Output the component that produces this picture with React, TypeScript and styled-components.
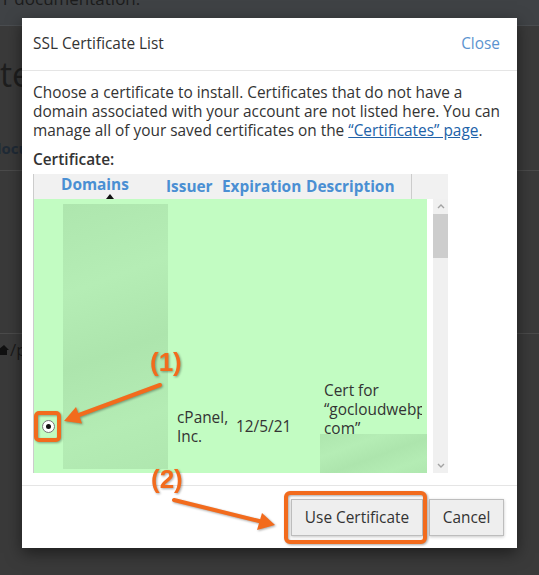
import React from "react";
import styled, { createGlobalStyle } from "styled-components";

const GlobalStyle = createGlobalStyle`
  html, body {
    margin: 0;
    padding: 0;
    background: #3a3a3a;
    overflow: hidden;
  }
  * {
    box-sizing: border-box;
  }
`;

const Palette = {
  text: "#333333",
  link: "#2162a8",
  close: "#5b93cf",
  heading: "#4a8fd3",
  green: "#c2fcc2",
  blur: "#b0e8b0",
  border: "#e5e5e5",
  orange: "#f26b1d",
};

const FONT = "15.4px";

const Page = styled.div`
  position: relative;
  width: 539px;
  height: 575px;
  overflow: hidden;
  font-family: "Open Sans", "Liberation Sans", sans-serif;
  background: #3a3a3a;
`;

const TopBar = styled.div`
  height: 26px;
  background: #3f4245;
  border-bottom: 1px solid #4a4d50;
  color: #1c1c1c;
  font-size: 17px;
  line-height: 16px;
  padding-left: 3px;
  overflow: hidden;

  span {
    display: block;
    margin-top: -9px;
  }
`;

const BgTitle = styled.div`
  color: #1e1e1e;
  font-size: 34px;
  line-height: 40px;
  padding: 28px 0 0 0;
  white-space: nowrap;
`;

const BgTab = styled.div`
  color: #1f2a36;
  font-weight: 700;
  font-size: 15px;
  line-height: 20px;
  margin: 44px 0 0 -8px;
  padding-bottom: 12px;
  border-bottom: 1px solid #4b4b4b;
  white-space: nowrap;
`;

const BgPath = styled.div`
  display: flex;
  align-items: center;
  gap: 1px;
  margin-top: 162px;
  padding-top: 6px;
  border-top: 1px solid #4b4b4b;
  color: #1a1a1a;
  font-size: 17px;
  line-height: 20px;
`;

const Modal = styled.div`
  position: absolute;
  top: 18px;
  left: 22px;
  width: 495px;
  background: #ffffff;
  box-shadow: 0 5px 15px rgba(0, 0, 0, 0.5);
  color: ${Palette.text};
`;

const ModalHeader = styled.div`
  height: 53px;
  display: flex;
  align-items: center;
  justify-content: space-between;
  padding: 0 17px 1px 11px;
  border-bottom: 1px solid ${Palette.border};
  font-size: ${FONT};
`;

const Title = styled.span`
  color: ${Palette.text};
`;

const CloseLink = styled.span`
  color: ${Palette.close};
`;

const ModalBody = styled.div`
  padding: 12px 11px 12px 11px;
  font-size: ${FONT};
  line-height: 19px;
`;

const Intro = styled.p`
  margin: 0;
`;

const Link = styled.span`
  color: ${Palette.link};
  text-decoration: underline;
`;

const FieldLabel = styled.div`
  margin-top: 10px;
  font-weight: 600;
`;

const Table = styled.div`
  margin-top: 5px;
  width: 415px;
  border-left: 1px solid #cccccc;
`;

const TableHead = styled.div`
  height: 25px;
  background: #f1f1f1;
  display: grid;
  grid-template-columns: 27px 105px 56px 84px 106px 1fr;
  align-items: end;
`;

const HeadCell = styled.div<{ $divider?: boolean; $raised?: boolean }>`
  height: 100%;
  display: flex;
  flex-direction: column;
  justify-content: ${(p) => (p.$raised ? "flex-start" : "flex-end")};
  padding-bottom: ${(p) => (p.$raised ? "0" : "3px")};
  color: ${Palette.heading};
  font-weight: 700;
  font-size: ${FONT};
  line-height: 19px;
  white-space: nowrap;
  border-right: ${(p) => (p.$divider ? "1px solid #cccccc" : "none")};
`;

const SortArrow = styled.div`
  width: 0;
  height: 0;
  margin: 0 0 0 45px;
  border-left: 4px solid transparent;
  border-right: 4px solid transparent;
  border-bottom: 5px solid #111111;
`;

const TableBody = styled.div`
  display: flex;
  height: 274px;
  background: #ffffff;
`;

const Row = styled.div`
  width: 393px;
  height: 100%;
  background: ${Palette.green};
  display: grid;
  grid-template-columns: 29px 109px 60px 87px 108px;
  grid-template-rows: 1fr 93px;
  overflow: hidden;
`;

const Cell = styled.div<{ $pad?: number }>`
  grid-row: 2;
  align-self: center;
  padding-left: ${(p) => p.$pad ?? 0}px;
  font-size: ${FONT};
  line-height: 19px;
  color: ${Palette.text};
`;

const RadioCell = styled.div`
  grid-row: 2;
  grid-column: 1;
  display: flex;
  justify-content: center;
  align-items: center;
`;

const Radio = styled.div`
  width: 13px;
  height: 13px;
  border-radius: 50%;
  border: 1px solid #767676;
  background: #ffffff;
  display: flex;
  align-items: center;
  justify-content: center;

  &::after {
    content: "";
    width: 5px;
    height: 5px;
    border-radius: 50%;
    background: #111111;
  }
`;

const DomainCell = styled.div`
  grid-row: 1 / 3;
  grid-column: 2;
  padding: 5px 4px 4px 0;
  display: flex;
`;

const Blurred = styled.div<{ $h?: number; $w?: number }>`
  flex: 1;
  width: ${(p) => (p.$w ? `${p.$w}px` : "auto")};
  height: ${(p) => (p.$h ? `${p.$h}px` : "auto")};
  background: linear-gradient(
    160deg,
    #aee6ae 0%,
    #b5edb5 30%,
    #ade5ad 55%,
    #b4ecb4 80%,
    #afe7af 100%
  );
`;

const DescCell = styled.div`
  grid-row: 2;
  grid-column: 5;
  align-self: center;
  font-size: ${FONT};
  line-height: 19px;
`;

const DescText = styled.div`
  width: 103px;
  padding-left: 5px;
  overflow: hidden;
  white-space: nowrap;
`;

const DescBlur = styled.div`
  margin: -4px 0 0 1px;
  display: flex;
`;

const Scrollbar = styled.div`
  margin-left: 6px;
  width: 15px;
  background: #f0f0f0;
  display: flex;
  flex-direction: column;
`;

const ScrollArrow = styled.div`
  height: 15px;
  display: flex;
  align-items: center;
  justify-content: center;
`;

const Thumb = styled.div`
  height: 44px;
  background: #cdcdcd;
`;

const Track = styled.div`
  flex: 1;
`;

const ModalFooter = styled.div`
  border-top: 1px solid ${Palette.border};
  padding: 13px 13px 12px;
  display: flex;
  justify-content: flex-end;
  gap: 6px;
`;

const Button = styled.button<{ $w: number }>`
  width: ${(p) => p.$w}px;
  height: 37px;
  padding: 0;
  background: #eeeeee;
  border: 1px solid #bdbdbd;
  box-shadow: 0 1px 3px rgba(0, 0, 0, 0.22);
  font-family: "Open Sans", "Liberation Sans", sans-serif;
  font-size: ${FONT};
  color: ${Palette.text};
`;

const Annotations = styled.svg`
  position: absolute;
  top: 0;
  left: 0;
  pointer-events: none;
  filter: drop-shadow(1px 1px 1px rgba(0, 0, 0, 0.35));
`;

const Chevron = ({ up }: { up?: boolean }) => (
  <svg width="8" height="5" viewBox="0 0 8 5">
    <polyline
      points={up ? "1,4 4,1 7,4" : "1,1 4,4 7,1"}
      fill="none"
      stroke="#a3a3a3"
      strokeWidth="1.4"
    />
  </svg>
);

const HomeIcon = () => (
  <svg width="9" height="12" viewBox="0 0 9 12">
    <path d="M-2 6 L4 1 L9 6 L7 6 L7 11 L-1 11 L-1 6 Z" fill="#111111" />
  </svg>
);

export default function App() {
  return (
    <Page>
      <GlobalStyle />
      <TopBar>
        <span>r documentation.</span>
      </TopBar>
      <BgTitle>tes</BgTitle>
      <BgTab>documentation</BgTab>
      <BgPath>
        <HomeIcon />
        <span>/public_html</span>
      </BgPath>

      <Modal>
        <ModalHeader>
          <Title>SSL Certificate List</Title>
          <CloseLink>Close</CloseLink>
        </ModalHeader>
        <ModalBody>
          <Intro>
            Choose a certificate to install. Certificates that do not have a
            domain associated with your account are not listed here. You can
            manage all of your saved certificates on the{" "}
            <Link>“Certificates” page</Link>.
          </Intro>
          <FieldLabel>Certificate:</FieldLabel>
          <Table>
            <TableHead>
              <div />
              <HeadCell $raised>
                <span style={{ marginTop: 1 }}>Domains</span>
                <div style={{ flex: 1 }} />
                <SortArrow />
              </HeadCell>
              <HeadCell>Issuer</HeadCell>
              <HeadCell>Expiration</HeadCell>
              <HeadCell $divider>Description</HeadCell>
              <div />
            </TableHead>
            <TableBody>
              <Row>
                <RadioCell>
                  <Radio />
                </RadioCell>
                <DomainCell>
                  <Blurred />
                </DomainCell>
                <Cell $pad={5} style={{ gridColumn: 3 }}>
                  cPanel, Inc.
                </Cell>
                <Cell $pad={4} style={{ gridColumn: 4 }}>
                  12/5/21
                </Cell>
                <DescCell>
                  <DescText>
                    <div>Cert for</div>
                    <div>“gocloudwebpanel.</div>
                    <div>com”</div>
                  </DescText>
                  <DescBlur>
                    <Blurred $w={104} $h={39} />
                  </DescBlur>
                </DescCell>
              </Row>
              <Scrollbar>
                <ScrollArrow>
                  <Chevron up />
                </ScrollArrow>
                <Thumb />
                <Track />
                <ScrollArrow>
                  <Chevron />
                </ScrollArrow>
              </Scrollbar>
            </TableBody>
          </Table>
        </ModalBody>
        <ModalFooter>
          <Button $w={132}>Use Certificate</Button>
          <Button $w={75}>Cancel</Button>
        </ModalFooter>
      </Modal>

      <Annotations width="539" height="575" viewBox="0 0 539 575">
        <g fill="none" stroke={Palette.orange} strokeWidth="4">
          <rect x="36" y="413" width="23" height="27" rx="3" />
          <rect x="286" y="493" width="139" height="49" rx="4" />
          <line x1="160" y1="385" x2="79" y2="415" strokeLinecap="round" />
          <line x1="174" y1="500" x2="259" y2="521" strokeLinecap="round" />
        </g>
        <g fill={Palette.orange}>
          <polygon points="64,421 82,423.5 76,407" />
          <polygon points="275,525 257,530 262,513" />
        </g>
        <g
          fill={Palette.orange}
          fontFamily="'Liberation Sans', Arial, sans-serif"
          fontWeight="700"
          fontSize="26"
        >
          <text x="150" y="371">
            (1)
          </text>
          <text x="151" y="488">
            (2)
          </text>
        </g>
      </Annotations>
    </Page>
  );
}
